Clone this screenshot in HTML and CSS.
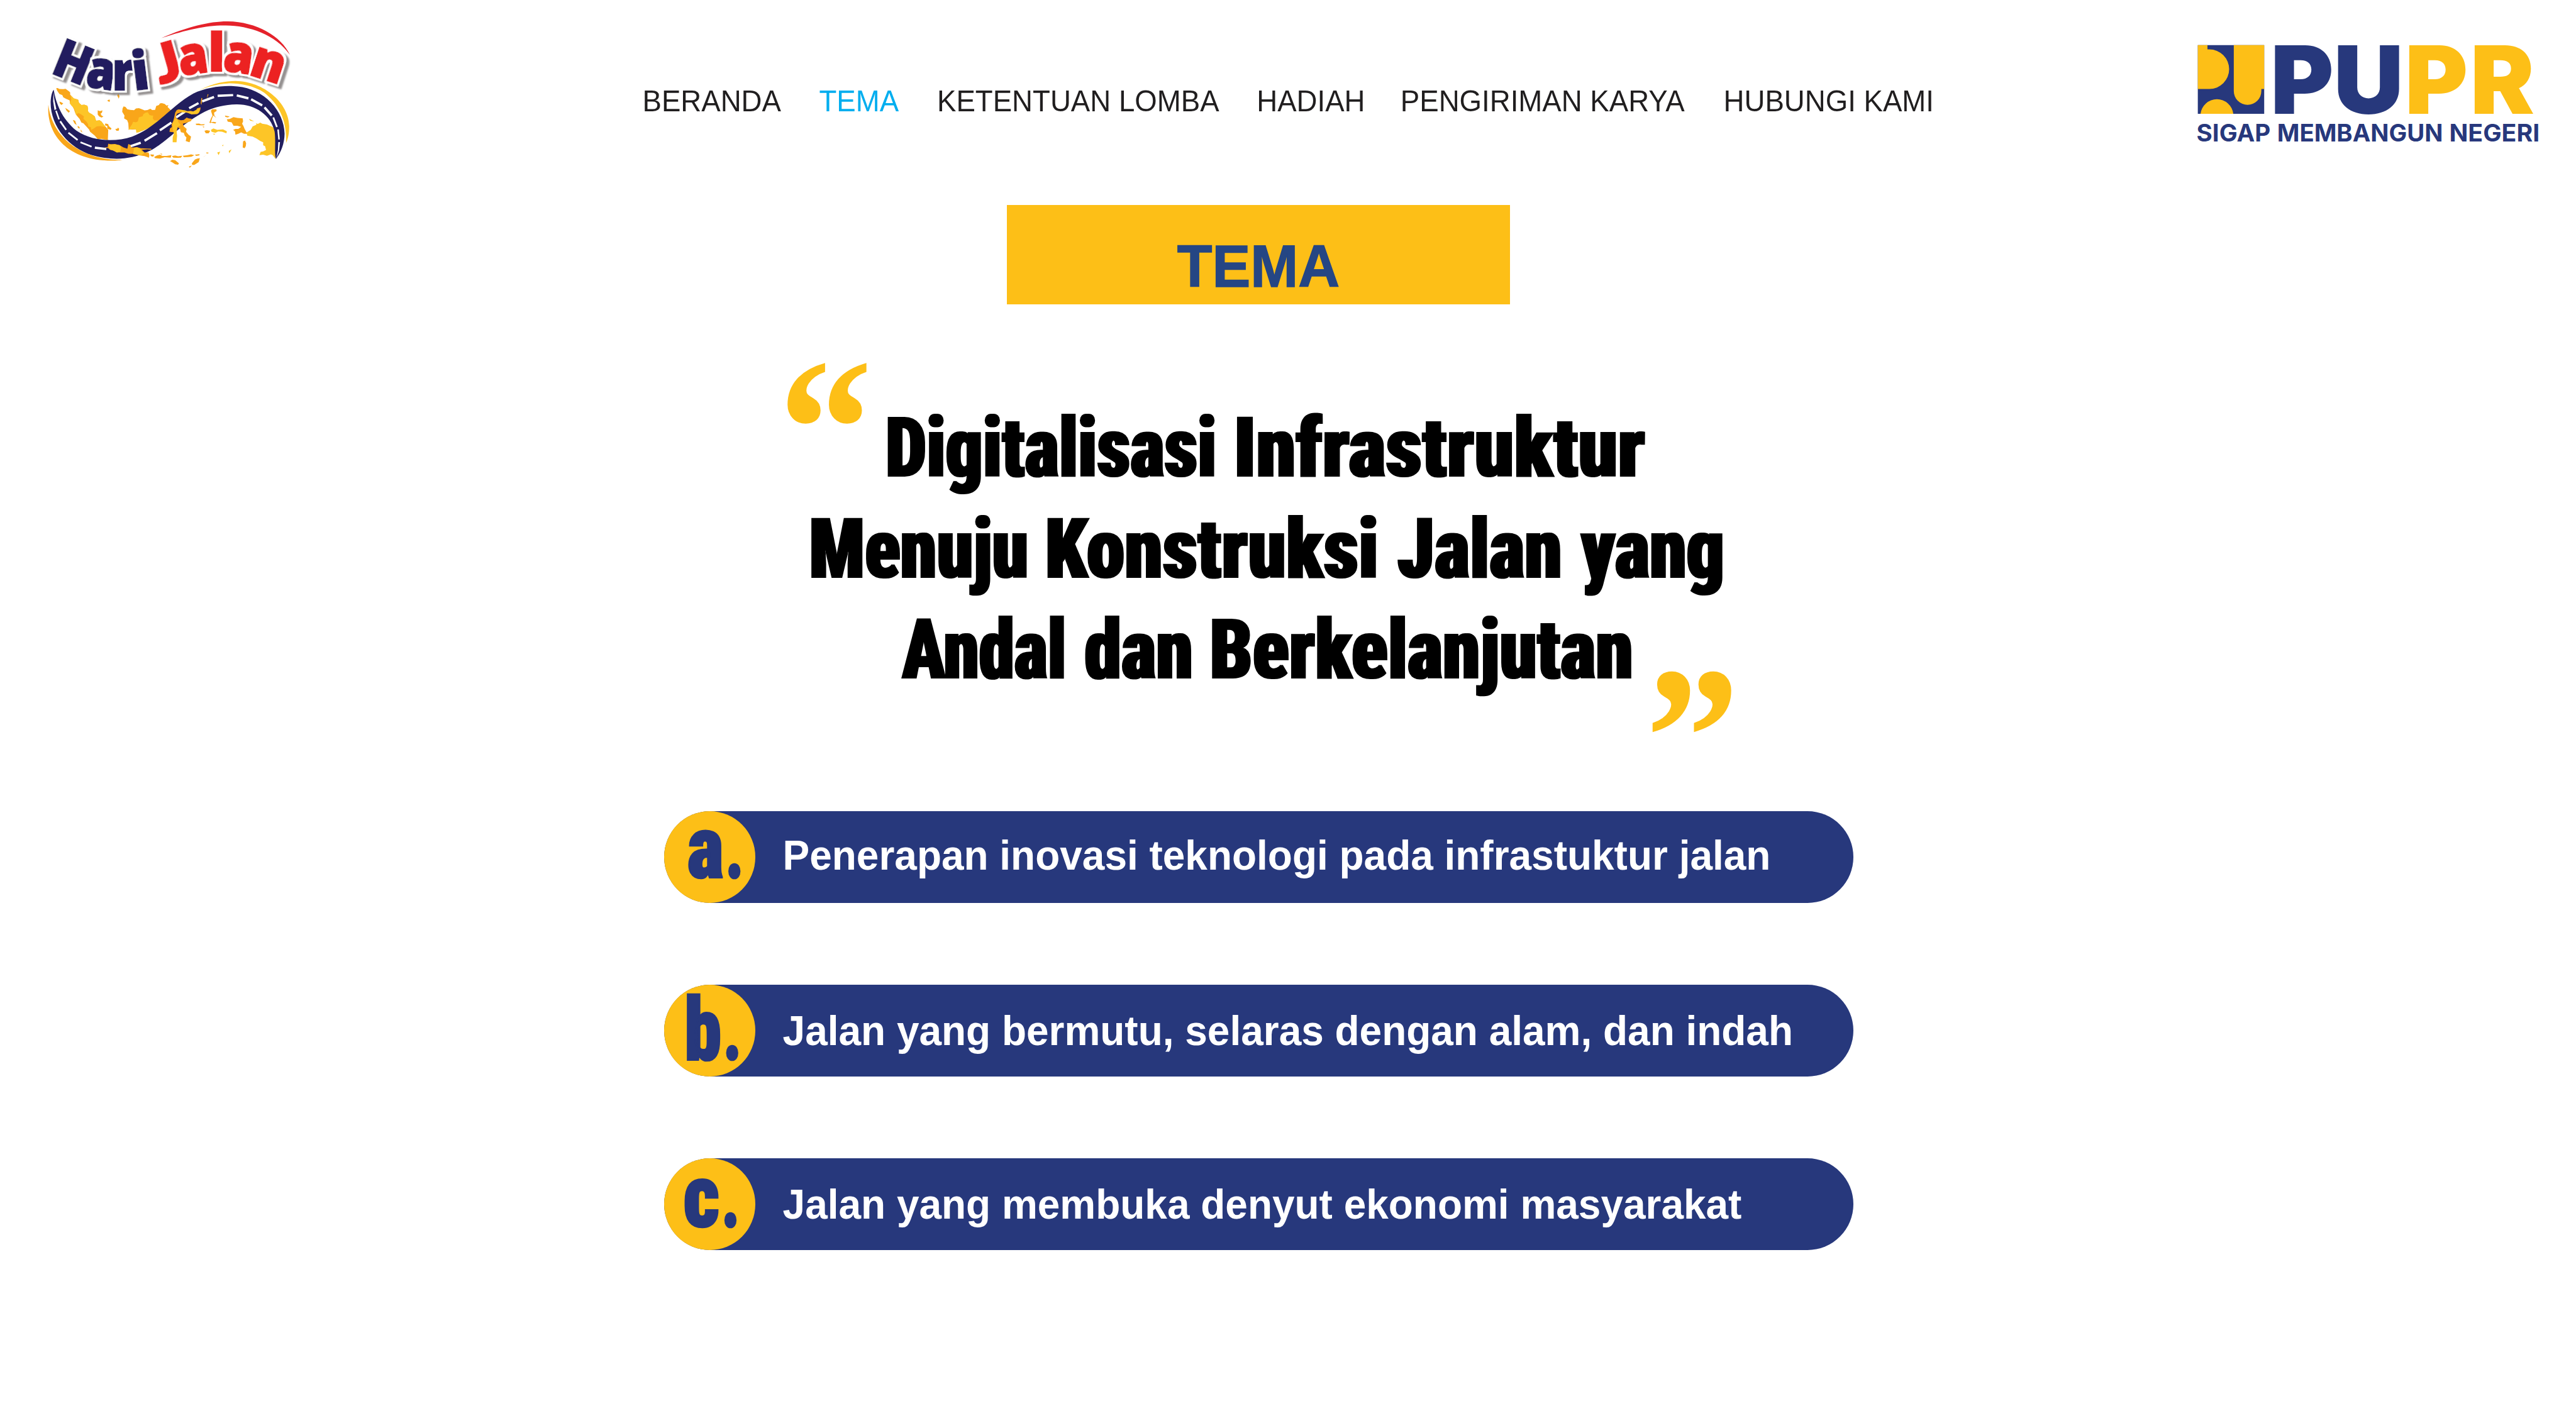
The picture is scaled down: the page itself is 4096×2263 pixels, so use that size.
FILE: index.html
```html
<!DOCTYPE html>
<html lang="id">
<head>
<meta charset="utf-8">
<title>Hari Jalan - Tema</title>
<link rel="stylesheet" href="styles.css">
</head>
<body>
<header class="site-header">
  <svg class="logo-event" viewBox="0 0 1440 870" role="img" aria-label="Hari Jalan">
    <defs>
      <filter id="letter-shadow" x="-5%" y="-10%" width="115%" height="125%">
        <feDropShadow dx="16" dy="13" stdDeviation="4" flood-color="#6f6b6b" flood-opacity=".75"/>
      </filter>
      <filter id="letter-outline" x="-20%" y="-10%" width="140%" height="120%">
        <feMorphology in="SourceAlpha" operator="dilate" radius="9" result="grown"/>
        <feFlood flood-color="#fff"/>
        <feComposite in2="grown" operator="in"/>
        <feMerge><feMergeNode/><feMergeNode in="SourceGraphic"/></feMerge>
      </filter>
    </defs>
    <!-- Sumatra, Kalimantan, Papua -->
    <path class="isle-dark" d="M113 402L120 401L130 406L150 407L162 405L180 418L186 424L186 436L205 455L215 458L228 462L232 478L245 490L260 488L275 493L280 510L278 520L285 530L300 538L315 550L318 562L322 572L340 570L350 576L360 590L385 620L383 674L350 667L330 668L315 650L290 630L285 618L255 585L245 582L235 562L220 545L212 530L205 510L195 492L185 480L183 465L165 458L150 450L145 438L130 432L118 415Z"/>
    <path class="isle" d="M188 440L205 455L215 458L228 464L232 478L245 490L260 488L277 495L280 510L278 520L285 530L300 538L315 550L318 562L322 572L340 570L350 578L372 606L345 600L325 602L310 612L296 620L294 606L280 602L280 590L270 575L255 562L258 550L245 540L230 532L215 540L212 520L205 505L192 492L183 480L192 462Z"/>
    <path class="isle-dark" d="M465 497L475 500L485 512L500 515L520 517L530 508L545 506L555 510L575 518L590 516L605 510L615 516L630 515L636 495L650 490L655 482L665 480L680 484L690 493L700 490L695 500L705 510L715 520C660 580 600 610 540 634L530 618L492 618L490 585L484 570L468 560L470 545L458 525L460 508Z"/>
    <path class="isle" d="M580 530L592 528L600 542L612 545L620 545L618 560L625 570L655 572C610 610 560 627 532 635L530 618L512 615L490 620L500 605L510 590L515 578L530 580L540 575L545 555L565 548L568 538Z"/>
    <path class="isle-dark" d="M1005 565L1020 563L1040 553L1060 557L1088 560L1090 575L1085 588L1092 600L1098 615L1112 640L1095 640L1080 633L1065 640L1050 645L1048 628L1038 620L1050 615L1065 615L1080 604L1060 598L1040 598L1030 580L1010 577Z"/>
    <path class="isle" d="M1108 634L1130 620L1140 602L1155 595L1180 582L1190 588L1215 592L1245 605L1275 640L1260 772L1245 752L1235 748L1215 755L1195 750L1175 752L1182 735L1195 732L1210 725L1205 705L1195 700L1195 685L1180 678L1160 665L1140 655L1112 650Z"/>
    <!-- Road -->
    <path class="road" d="M100 410C112 480 140 560 220 625C300 680 420 685 510 655C640 605 720 490 830 430C900 395 1000 385 1060 393C1200 405 1305 520 1307 640C1306 690 1290 735 1262 772C1252 740 1262 690 1255 630C1235 540 1150 485 1055 487C930 490 850 535 720 645C660 695 620 725 590 735C500 778 400 780 300 752C180 715 80 600 84 470C86 440 92 420 100 410Z"/>
    <g class="lane">
      <path d="M957 442L1038 438M1057 440L1118 455M1132 460L1190 492M1202 502L1240 545M876 471L938 448M808 507L857 480M740 555L790 522M655 622L715 582M575 677L640 637M495 708L555 687M315 713L375 720"/>
      <path class="lane-mid" d="M240 685L298 708M177 635L225 673M134 575L165 620M1248 555L1267 605"/>
      <path class="lane-thin" d="M112 520L128 565M1273 618L1278 670"/>
    </g>
    <path class="lane-tip" d="M99 425L103 460L114 512L104 516L97 470ZM1274 684L1283 684L1278 730L1264 768L1272 725Z"/>
    <path class="isle-dark" d="M72 488C60 650 180 780 400 781C430 781 450 779 460 776C250 780 90 660 72 488Z"/>
    <path class="isle" d="M862 412C935 375 1000 364 1050 364C1200 366 1330 480 1331 600C1331 640 1325 665 1315 688C1320 560 1270 480 1200 425C1140 385 1060 375 1010 377C950 380 900 395 862 412Z"/>
    <!-- Java, Sulawesi and the smaller islands -->
    <path class="isle-dark" d="M365 710L382 710L385 692L400 695L420 694L445 700L465 712L485 718L490 694L500 698L505 712L520 712L535 710L555 716L610 718L610 724L590 722L560 724L575 738L596 738L600 752L598 765L575 757L540 752L515 745L490 745L470 738L430 737L412 728L395 724L385 716Z"/>
    <path class="isle" d="M395 696L420 695L445 700L452 712L448 735L430 738L412 728L392 722L388 706ZM520 714L535 711L553 718L558 730L575 740L558 752L540 750L515 746Z"/>
    <path class="isle-dark" d="M735 530L742 518L750 513L775 516L800 522L815 520L830 524L845 516L850 507L868 502L866 516L858 532L850 537L820 538L800 530L770 527L745 535L738 550L742 562L765 570L780 568L795 556L805 560L822 562L818 574L800 580L792 584L775 588L780 602L795 615L792 630L805 645L818 655L814 672L810 685L790 678L794 660L785 650L780 635L765 632L760 615L748 605L742 630L720 632L705 630L708 612L718 605L716 590L724 575L730 555Z"/>
    <path class="isle" d="M752 514L775 516L800 524L830 524L862 506L862 525L850 537L820 538L800 530L770 527ZM735 562L745 560L752 580L765 595L750 602L742 622L745 650L742 685L722 685L722 660L728 640L722 610L722 585Z"/>
    <path class="isle-dark" d="M928 512L950 512L952 520L938 530L940 545L950 557L934 545L928 560L920 585L914 582L922 560L930 545L922 520ZM868 480L872 452L877 455L872 490ZM905 432L909 436L900 458ZM708 783L720 776L735 778L755 795L750 802L735 800L720 790ZM822 795L838 775L850 770L864 768L858 788L835 803L824 803ZM806 812L822 806L812 818ZM432 440L438 430L444 444L440 457ZM385 463L394 462L392 474L380 468ZM370 586L385 590L388 600L402 612L398 620L380 614L380 600L368 596ZM422 615L432 614L436 608L442 614L440 624L428 625ZM330 518L342 522L355 518L352 530L345 535L350 545L360 550L350 556L338 550L330 540ZM160 505L172 512L185 522L178 530L166 518ZM200 568L212 572L220 595L208 585ZM225 598L235 605L235 614L226 608ZM240 618L246 625L250 634L242 628ZM130 472L140 476L150 482L140 490L132 482ZM888 625L900 621L918 625L910 638L895 638ZM842 588L860 587L870 591L890 590L885 596L865 596L845 594ZM878 602L888 604L884 608ZM915 580L935 578L950 580L945 587ZM1090 680L1100 676L1106 690L1104 705L1098 716L1088 712ZM995 545L1020 550L1010 555L998 552ZM605 748L625 750L620 760L608 757ZM625 762L640 754L655 750L668 756L690 756L715 752L712 765L680 763L655 770L630 768ZM656 742L668 746L664 750ZM718 757L735 754L750 758L772 755L765 765L745 766L725 765ZM775 755L800 752L818 748L835 752L820 760L800 762L780 763ZM838 750L862 747L862 753L845 756ZM898 737L912 740L900 745ZM888 758L900 752L878 764Z"/>
    <path class="isle" d="M922 620L935 612L955 620L985 617L1005 627L1003 638L980 630L960 628L945 635L925 630ZM1120 562L1130 566L1148 575L1128 572ZM1158 585L1170 590L1160 593ZM955 738L970 734L962 752ZM1015 730L1030 722L1018 742ZM930 640L945 640L940 645ZM200 470L212 474L212 486L204 486ZM980 700L988 698L984 706Z"/>
    <path class="swoosh" d="M663 140C800 80 920 52 1010 53C1160 55 1290 130 1335 228C1260 120 1120 75 1000 74C900 72 800 95 663 140Z"/>
    <g class="letters" filter="url(#letter-shadow)">
      <g class="letters-blue">
        <text transform="translate(80 320) rotate(22)" textLength="188" lengthAdjust="spacingAndGlyphs">H</text>
        <text transform="translate(263 390) rotate(8)" textLength="150" lengthAdjust="spacingAndGlyphs">a</text>
        <text transform="translate(406 412) rotate(0)" textLength="114" lengthAdjust="spacingAndGlyphs">r</text>
        <text transform="translate(521 413) rotate(-7)" textLength="86" lengthAdjust="spacingAndGlyphs">i</text>
      </g>
      <g class="letters-red">
        <text class="letter-j" transform="translate(659 380) rotate(-16)" textLength="130" lengthAdjust="spacingAndGlyphs">J</text>
        <text transform="translate(763 334) rotate(-8)" textLength="154" lengthAdjust="spacingAndGlyphs">a</text>
        <text transform="translate(908 313)" textLength="86" lengthAdjust="spacingAndGlyphs">l</text>
        <text transform="translate(980 306) rotate(8)" textLength="154" lengthAdjust="spacingAndGlyphs">a</text>
        <text transform="translate(1115 329) rotate(18)" textLength="174" lengthAdjust="spacingAndGlyphs">n</text>
      </g>
    </g>
  </svg>

  <nav class="menu">
    <a class="menu-link">BERANDA</a>
    <a class="menu-link menu-link-active">TEMA</a>
    <a class="menu-link">KETENTUAN LOMBA</a>
    <a class="menu-link">HADIAH</a>
    <a class="menu-link">PENGIRIMAN KARYA</a>
    <a class="menu-link">HUBUNGI KAMI</a>
  </nav>

  <svg class="logo-pupr" viewBox="0 0 660 220" role="img" aria-label="PUPR">
    <path class="navy" d="M30.3 28.3H146V148H30.3Z"/>
    <path class="gold" d="M30.3 28.3H47.1V35.7H50.4A34.5 34.5 0 0 1 50.4 104.7H30.3ZM93 28.3H146V104.7H141V108.3A24 24 0 0 1 93 108.3ZM35 148A28.8 28.8 0 0 1 92.2 148Z"/>
    <g class="pupr-name">
      <text class="navy" x="157" y="147.5" textLength="110" lengthAdjust="spacingAndGlyphs">P</text>
      <text class="navy" x="267" y="147.5" textLength="122" lengthAdjust="spacingAndGlyphs">U</text>
      <text class="gold" x="391" y="147.5" textLength="110" lengthAdjust="spacingAndGlyphs">P</text>
      <text class="gold" x="505" y="147.5" textLength="112" lengthAdjust="spacingAndGlyphs">R</text>
    </g>
    <g class="pupr-tagline navy">
      <text x="28" y="196" textLength="129" lengthAdjust="spacingAndGlyphs">SIGAP</text>
      <text x="168.5" y="196" textLength="289" lengthAdjust="spacingAndGlyphs">MEMBANGUN</text>
      <text x="468.5" y="196" textLength="157.5" lengthAdjust="spacingAndGlyphs">NEGERI</text>
    </g>
  </svg>
</header>

<main class="content">
  <h2 class="banner"><span class="banner-text">TEMA</span></h2>

  <svg class="theme" viewBox="1360 620 1670 680">
    <defs>
      <filter id="widen" x="-5%" y="-5%" width="110%" height="110%">
        <feMorphology operator="dilate" radius="2 0"/>
      </filter>
    </defs>
    <g class="quote-mark">
      <text x="1356.5" y="865" textLength="164" lengthAdjust="spacingAndGlyphs">“</text>
      <text x="2867.5" y="1402.6" textLength="164" lengthAdjust="spacingAndGlyphs">”</text>
    </g>
    <g class="theme-text" filter="url(#widen)">
      <text x="1543" y="830.5" textLength="577" lengthAdjust="spacingAndGlyphs">Digitalisasi</text>
      <text x="2150" y="830.5" textLength="717" lengthAdjust="spacingAndGlyphs">Infrastruktur</text>
      <text x="1410" y="1006.5" textLength="382" lengthAdjust="spacingAndGlyphs">Menuju</text>
      <text x="1821" y="1006.5" textLength="581" lengthAdjust="spacingAndGlyphs">Konstruksi</text>
      <text x="2435" y="1006.5" textLength="287" lengthAdjust="spacingAndGlyphs">Jalan</text>
      <text x="2755" y="1006.5" textLength="250" lengthAdjust="spacingAndGlyphs">yang</text>
      <text x="1572" y="1181.7" textLength="286" lengthAdjust="spacingAndGlyphs">Andal</text>
      <text x="1890" y="1181.7" textLength="189" lengthAdjust="spacingAndGlyphs">dan</text>
      <text x="2108" y="1181.7" textLength="738" lengthAdjust="spacingAndGlyphs">Berkelanjutan</text>
    </g>
  </svg>

  <ol class="topics">
    <li class="topic">
      <svg class="badge" viewBox="0 0 159 160">
        <text y="116"><tspan x="40" textLength="64" lengthAdjust="spacingAndGlyphs">a</tspan><tspan class="dot" x="107" textLength="32" lengthAdjust="spacingAndGlyphs">.</tspan></text>
      </svg>
      <span class="topic-text">Penerapan inovasi teknologi pada infrastuktur jalan</span>
    </li>
    <li class="topic">
      <svg class="badge" viewBox="0 0 159 160">
        <text y="131"><tspan x="35" textLength="65" lengthAdjust="spacingAndGlyphs">b</tspan><tspan class="dot" x="103" textLength="32" lengthAdjust="spacingAndGlyphs">.</tspan></text>
      </svg>
      <span class="topic-text topic-text-low">Jalan yang bermutu, selaras dengan alam, dan indah</span>
    </li>
    <li class="topic">
      <svg class="badge" viewBox="0 0 159 160">
        <text y="120"><tspan x="33" textLength="64" lengthAdjust="spacingAndGlyphs">c</tspan><tspan class="dot" x="100" textLength="32" lengthAdjust="spacingAndGlyphs">.</tspan></text>
      </svg>
      <span class="topic-text topic-text-low">Jalan yang membuka denyut ekonomi masyarakat</span>
    </li>
  </ol>
</main>
</body>
</html>
```
FILE: styles.css
```css
/* 1rem = 10 design units; the design is 4489 units wide */
html {
  font-size: calc(100vw / 448.9);
}

body {
  margin: 0;
  height: 100vh;
  overflow: hidden;
  background: #fff;
  font-family: "Liberation Sans", Arial, sans-serif;
}

svg { overflow: visible; }

.navy { fill: #27387c; }
.gold { fill: #fdbf17; }

/* Header */
.site-header {
  display: grid;
  grid-template-columns: 105.9rem 268.1rem 66rem;
  align-items: start;
  height: 33.7rem;
  padding: 2rem 0 0 6rem;
}

.logo-event {
  width: 48rem;
  height: 29rem;
}

.menu {
  display: grid;
  grid-template-columns: 30.8rem 20.55rem 55.7rem 25.05rem 56.3rem auto;
  justify-content: start;
  margin: 13.2rem 0 0 0.05rem;
  font-size: 5rem;
  line-height: 1;
  color: #201e1f;
  white-space: nowrap;
}

.menu-link {
  transform: scaleY(1.04);
  transform-origin: 0 84.65%;
}

.menu-link-active { color: #00aeef; }

.logo-pupr {
  width: 66rem;
  height: 22rem;
  margin-top: 3rem;
}

.pupr-name {
  font: 900 164px Inter, sans-serif;
}

.pupr-tagline {
  font: 700 41.7px Inter, sans-serif;
}

/* Event logo */
.isle { fill: #fdc527; }
.isle-dark { fill: #f9a61a; }
.road { fill: #221e5e; }
.swoosh { fill: #e5222b; }

.lane {
  fill: none;
  stroke: #fff;
  stroke-width: 12;
}

.lane-mid { stroke-width: 9; }
.lane-thin { stroke-width: 8; }
.lane-tip { fill: #fff; }

.letters {
  font: 800 274px "Open Sans", sans-serif;
  stroke-width: 9;
}

.letters text { filter: url(#letter-outline); }
.letters-blue { fill: #221e5e; stroke: #221e5e; }
.letters-red { fill: #ec2224; stroke: #ec2224; }

.letter-j {
  font-family: Lato, sans-serif;
  font-weight: 900;
  stroke-width: 14;
}

/* Content */
.content {
  display: flex;
  flex-direction: column;
  align-items: flex-start;
}

.banner {
  display: flex;
  justify-content: center;
  width: 87.6rem;
  height: 17.3rem;
  margin: 0 0 0 175.5rem;
  background: #fdbf17;
  color: #254684;
  font-size: 10rem;
  line-height: 1;
}

.banner-text {
  height: 10rem;
  margin-top: 5.85rem;
  transform: scaleY(1.045);
  transform-origin: 0 84.65%;
  -webkit-text-stroke: 0.15rem #254684;
}

.theme {
  width: 167rem;
  height: 68rem;
  margin: 9rem 0 0 136rem;
}

.theme-text {
  font: 900 147px Roboto, sans-serif;
  font-stretch: 75%;
  fill: #000;
}

.quote-mark {
  font: 700 350px "Liberation Serif", serif;
  fill: #fdbf17;
}

.topics {
  display: flex;
  flex-direction: column;
  gap: 14.3rem;
  margin: 11.4rem 0 0 115.7rem;
  padding: 0;
  list-style: none;
}

.topic {
  display: flex;
  align-items: flex-start;
  width: 207.3rem;
  height: 15.95rem;
  border-radius: 8rem;
  background: #27387c;
}

.badge {
  flex: none;
  width: 15.9rem;
  height: 15.95rem;
  border-radius: 50%;
  background: #fdbf17;
  fill: #27387c;
  stroke: #27387c;
  stroke-width: 3;
  font: 900 154px Roboto, sans-serif;
  font-stretch: 75%;
}

.topic-text {
  margin: 4.35rem 0 0 4.8rem;
  color: #fff;
  font-size: 7.01rem;
  font-weight: 700;
  line-height: 1;
  white-space: nowrap;
  transform: scaleY(1.04);
  transform-origin: 0 84.65%;
}

.topic-text-low { margin-top: 4.7rem; }
```
